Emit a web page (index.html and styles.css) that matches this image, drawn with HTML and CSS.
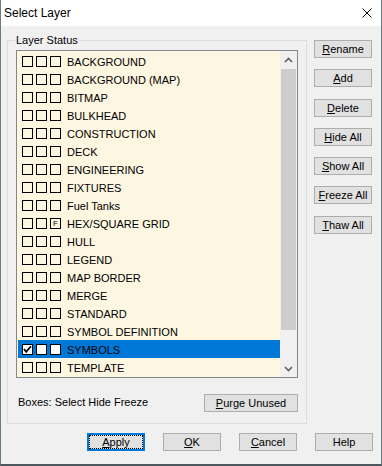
FILE: index.html
```html
<!DOCTYPE html>
<html lang="en">
<head>
  <meta charset="UTF-8">
  <title>Select Layer</title>
  <link rel="stylesheet" href="styles.css">
</head>
<body>
  <div class="window">
    <div class="titlebar">
      <span class="title">Select Layer</span>
      <svg class="close" width="10" height="10" viewBox="0 0 10 10" aria-label="Close">
        <path d="M0.5 0.5 L9.5 9.5 M9.5 0.5 L0.5 9.5" stroke="#000" stroke-width="1" fill="none"/>
      </svg>
    </div>

    <div class="dialog">
      <div class="main">
        <!-- Layer Status group -->
        <div class="group">
          <span class="group-title">Layer Status</span>
          <div class="listbox">
            <ul class="layers">
              <li class="layer"><span class="box"></span><span class="box"></span><span class="box"></span><span class="name">BACKGROUND</span></li>
              <li class="layer"><span class="box"></span><span class="box"></span><span class="box"></span><span class="name">BACKGROUND (MAP)</span></li>
              <li class="layer"><span class="box"></span><span class="box"></span><span class="box"></span><span class="name">BITMAP</span></li>
              <li class="layer"><span class="box"></span><span class="box"></span><span class="box"></span><span class="name">BULKHEAD</span></li>
              <li class="layer"><span class="box"></span><span class="box"></span><span class="box"></span><span class="name">CONSTRUCTION</span></li>
              <li class="layer"><span class="box"></span><span class="box"></span><span class="box"></span><span class="name">DECK</span></li>
              <li class="layer"><span class="box"></span><span class="box"></span><span class="box"></span><span class="name">ENGINEERING</span></li>
              <li class="layer"><span class="box"></span><span class="box"></span><span class="box"></span><span class="name">FIXTURES</span></li>
              <li class="layer"><span class="box"></span><span class="box"></span><span class="box"></span><span class="name">Fuel Tanks</span></li>
              <li class="layer"><span class="box"></span><span class="box"></span><span class="box box-freeze">F</span><span class="name">HEX/SQUARE GRID</span></li>
              <li class="layer"><span class="box"></span><span class="box"></span><span class="box"></span><span class="name">HULL</span></li>
              <li class="layer"><span class="box"></span><span class="box"></span><span class="box"></span><span class="name">LEGEND</span></li>
              <li class="layer"><span class="box"></span><span class="box"></span><span class="box"></span><span class="name">MAP BORDER</span></li>
              <li class="layer"><span class="box"></span><span class="box"></span><span class="box"></span><span class="name">MERGE</span></li>
              <li class="layer"><span class="box"></span><span class="box"></span><span class="box"></span><span class="name">STANDARD</span></li>
              <li class="layer"><span class="box"></span><span class="box"></span><span class="box"></span><span class="name">SYMBOL DEFINITION</span></li>
              <li class="layer selected">
                <span class="box">
                  <svg width="9" height="9" viewBox="0 0 9 9"><polyline points="1,4 3.2,6.8 8,1.2" stroke="#000" stroke-width="1.7" fill="none"/></svg>
                </span><span class="box"></span><span class="box"></span><span class="name">SYMBOLS</span>
              </li>
              <li class="layer"><span class="box"></span><span class="box"></span><span class="box"></span><span class="name">TEMPLATE</span></li>
            </ul>
            <div class="scrollbar">
              <div class="scroll-arrow">
                <svg width="9" height="6" viewBox="0 0 9 6"><polyline points="1,5 4.5,1.5 8,5" stroke="#606060" stroke-width="1.6" fill="none"/></svg>
              </div>
              <div class="scroll-track"><div class="scroll-thumb"></div></div>
              <div class="scroll-arrow">
                <svg width="9" height="6" viewBox="0 0 9 6"><polyline points="1,1 4.5,4.5 8,1" stroke="#606060" stroke-width="1.6" fill="none"/></svg>
              </div>
            </div>
          </div>
          <div class="group-footer">
            <span class="hint">Boxes: Select Hide Freeze</span>
            <button class="btn btn-purge"><u>P</u>urge Unused</button>
          </div>
        </div>

        <!-- Side buttons -->
        <div class="side-buttons">
          <button class="btn"><u>R</u>ename</button>
          <button class="btn"><u>A</u>dd</button>
          <button class="btn"><u>D</u>elete</button>
          <button class="btn"><u>H</u>ide All</button>
          <button class="btn"><u>S</u>how All</button>
          <button class="btn"><u>F</u>reeze All</button>
          <button class="btn"><u>T</u>haw All</button>
        </div>
      </div>

      <div class="actions">
        <button class="btn btn-default"><u>A</u>pply</button>
        <button class="btn"><u>O</u>K</button>
        <button class="btn"><u>C</u>ancel</button>
        <button class="btn">Help</button>
      </div>
    </div>
  </div>
</body>
</html>
```

FILE: styles.css
```css
html, body {
  margin: 0;
  padding: 0;
  background: #3e4d53;
}
body {
  font-family: "Liberation Sans", Arial, sans-serif;
  font-size: 11px;
  color: #000;
}
.window {
  width: 382px;
  height: 466px;
  box-sizing: border-box;
  border-left: 1px solid #6b7c84;
  border-right: 1px solid #6b7c84;
  border-bottom: 2px solid #4a585e;
  background: #f0f0f0;
  display: flex;
  flex-direction: column;
}
/* Title bar */
.titlebar {
  height: 26px;
  background: #fff;
  display: flex;
  align-items: center;
  justify-content: space-between;
  padding-left: 3px;
  padding-right: 9px;
  flex-shrink: 0;
}
.title {
  font-size: 12px;
}
.close {
  display: block;
}
/* Dialog body */
.dialog {
  flex: 1;
  padding: 14px 8px 0 6px;
}
.main {
  display: flex;
  gap: 7px;
}
.group {
  position: relative;
  width: 300px;
  height: 384px;
  box-sizing: border-box;
  border: 1px solid #dcdcdc;
  padding: 9px 8px 0 8px;
}
.group-title {
  position: absolute;
  top: -8px;
  left: 7px;
  padding: 0 1px;
  background: #f0f0f0;
  line-height: 14px;
}
.listbox {
  display: flex;
  height: 328px;
  box-sizing: border-box;
  border: 1px solid #828790;
  background: #fdf6e1;
}
.layers {
  flex: 1;
  list-style: none;
  margin: 0;
  padding: 1px 0 1px 1px;
}
.layer {
  height: 18px;
  display: flex;
  align-items: center;
  padding-left: 4px;
  line-height: 18px;
}
.layer.selected {
  background: #0078d7;
}
.box {
  width: 11px;
  height: 11px;
  box-sizing: border-box;
  border: 1px solid #000;
  margin-right: 3px;
  display: flex;
  align-items: center;
  justify-content: center;
}
.box:nth-child(3) {
  margin-right: 6px;
}
.selected .box {
  background: #fff;
}
.box-freeze {
  font-size: 8px;
  line-height: 9px;
}
.name {
  padding-top: 1px;
  white-space: nowrap;
}
/* Scrollbar */
.scrollbar {
  width: 17px;
  background: #f0f0f0;
  display: flex;
  flex-direction: column;
}
.scroll-arrow {
  height: 17px;
  display: flex;
  align-items: center;
  justify-content: center;
  flex-shrink: 0;
}
.scroll-track {
  flex: 1;
  padding: 1px 1px 0 1px;
}
.scroll-thumb {
  height: 261px;
  background: #cdcdcd;
}
.group-footer {
  display: flex;
  justify-content: space-between;
  align-items: center;
  margin-top: 16px;
  padding-left: 2px;
}
.hint {
  margin-top: -2px;
}
/* Buttons */
.btn {
  width: 58px;
  height: 18px;
  box-sizing: border-box;
  border: 1px solid #adadad;
  background: #e1e1e1;
  font-family: "Liberation Sans", Arial, sans-serif;
  font-size: 11px;
  color: #000;
  padding: 0;
  line-height: 16px;
  text-align: center;
  position: relative;
}
.btn u {
  text-decoration-thickness: 1px;
  text-underline-offset: 1px;
}
.btn-purge {
  width: 94px;
}
.btn-default {
  border: 2px solid #0078d7;
  line-height: 14px;
}
.btn-default::after {
  content: "";
  position: absolute;
  inset: 0;
  border: 1px dotted #000;
}
.side-buttons {
  display: flex;
  flex-direction: column;
  gap: 11.3px;
}
.actions {
  display: flex;
  justify-content: flex-end;
  gap: 18px;
  margin-top: 9px;
}
```
